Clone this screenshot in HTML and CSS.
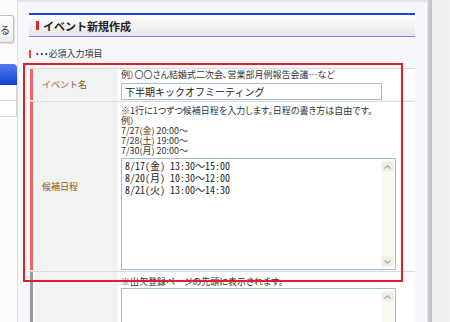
FILE: index.html
```html
<!DOCTYPE html>
<html lang="ja">
<head>
    <meta charset="UTF-8">
    <meta name="viewport" content="width=device-width, initial-scale=1.0">
    <title>イベント新規作成</title>
    <link rel="stylesheet" href="styles.css">
</head>
<body>
    <div class="page">
        <aside class="side">
            <div class="back-btn"><span>戻る</span></div>
            <ul class="side-nav">
                <li class="active"></li>
                <li></li>
                <li></li>
            </ul>
        </aside>

        <main class="main">
            <h2 class="page-title">イベント新規作成</h2>
            <p class="req-note">・・・必須入力項目</p>

            <div class="form">
                <div class="form-row required">
                    <div class="form-label">イベント名</div>
                    <div class="form-value">
                        <p class="hint">例）〇〇さん結婚式二次会、営業部月例報告会議…など</p>
                        <input class="text-input" type="text" value="下半期キックオフミーティング">
                    </div>
                </div>

                <div class="form-row required">
                    <div class="form-label">候補日程</div>
                    <div class="form-value schedule">
                        <p class="hint">※1行に1つずつ候補日程を入力します。日程の書き方は自由です。<br>例）<br>7/27(金) 20:00～<br>7/28(土) 19:00～<br>7/30(月) 20:00～</p>
                        <div class="textarea tall">
                            <div class="textarea-body">8/17(金) 13:30～15:00
8/20(月) 10:30～12:00
8/21(火) 13:00～14:30</div>
                            <div class="scrollbar">
                                <span class="scroll-btn"><svg width="7" height="4" viewBox="0 0 7 4"><path d="M0.5 3.5 L3.5 0.8 L6.5 3.5" fill="none" stroke="#a9a9a0" stroke-width="1.2"/></svg></span>
                                <span class="scroll-btn"><svg width="7" height="4" viewBox="0 0 7 4"><path d="M0.5 0.5 L3.5 3.2 L6.5 0.5" fill="none" stroke="#a9a9a0" stroke-width="1.2"/></svg></span>
                            </div>
                        </div>
                    </div>
                </div>

                <div class="form-row">
                    <div class="form-label"></div>
                    <div class="form-value memo">
                        <p class="hint">※出欠登録ページの先頭に表示されます。</p>
                        <div class="textarea">
                            <div class="textarea-body"></div>
                            <div class="scrollbar">
                                <span class="scroll-btn"><svg width="7" height="4" viewBox="0 0 7 4"><path d="M0.5 3.5 L3.5 0.8 L6.5 3.5" fill="none" stroke="#a9a9a0" stroke-width="1.2"/></svg></span>
                            </div>
                        </div>
                    </div>
                </div>
            </div>

            <div class="highlight"></div>
        </main>

        <div class="rail"></div>
    </div>
</body>
</html>
```

FILE: styles.css
```css
* {
    margin: 0;
    padding: 0;
    box-sizing: border-box;
}

body {
    font-family: "Noto Sans CJK JP", "Liberation Sans", sans-serif;
    font-size: 9px;
    color: #333;
    background: #f0f0f0;
}

.page {
    display: flex;
    height: 322px;
    overflow: hidden;
}

/* left column */
.side {
    width: 18px;
    flex-shrink: 0;
    background: #fbfbfb;
    border-right: 1px solid #e2e2e2;
    padding-top: 15px;
}

.back-btn {
    width: 14px;
    height: 28px;
    display: flex;
    align-items: center;
    justify-content: flex-end;
    overflow: hidden;
    white-space: nowrap;
    padding-right: 3px;
    font-size: 10px;
    color: #333;
    background: linear-gradient(#ffffff, #ececec);
    border: 1px solid #c2c2c2;
    border-left: none;
    border-radius: 0 3px 3px 0;
    box-shadow: 1px 1px 0 #e0e0e0;
}

.side-nav {
    list-style: none;
    margin-top: 21px;
    width: 17px;
}

.side-nav li {
    height: 16px;
    background: #fff;
    border-right: 1px solid #cfcfcf;
    border-bottom: 1px solid #dedede;
}

.side-nav li.active {
    height: 21px;
    background: linear-gradient(#4f7cf0, #1240cc);
    border-right: none;
    border-bottom: none;
    border-radius: 0 4px 0 0;
}

/* main panel */
.main {
    position: relative;
    flex: 1;
    padding: 13px 12px 0 11px;
    background: linear-gradient(#dedede, #f6f8fc 3px);
}

.page-title {
    height: 24px;
    display: flex;
    align-items: center;
    padding-left: 7px;
    font-size: 11px;
    font-weight: bold;
    color: #222;
    background: linear-gradient(#ffffff, #e6e6e6);
    border-top: 2px solid #2042e0;
    border-bottom: 1px solid #6c8af2;
}

.page-title::before {
    content: "";
    width: 3px;
    height: 9px;
    margin-right: 4px;
    background: #e02424;
}

.req-note {
    display: flex;
    align-items: center;
    height: 10px;
    margin-top: 12px;
    line-height: 10px;
    font-feature-settings: "palt";
}

.req-note::before {
    content: "";
    width: 2px;
    height: 8px;
    margin-right: 4px;
    background: #ee4444;
}

.form {
    margin-top: 9px;
}

.form-row {
    display: flex;
    gap: 2px;
    padding: 0 0 1px 1px;
    border-top: 1px solid #dcdcdc;
}

.form-row::before {
    content: "";
    width: 3px;
    background: #9a9a9a;
}

.form-row.required::before {
    background: #f26464;
}

.form-label {
    width: 82px;
    display: flex;
    align-items: center;
    padding-left: 7px;
    background: #f2f2f2;
    color: #8a5a20;
}

.form-value {
    flex: 1;
    background: #fff;
    padding-left: 2px;
}

.hint {
    line-height: 11px;
    font-feature-settings: "palt";
}

.text-input {
    display: block;
    width: 261px;
    height: 17px;
    margin-top: 3px;
    padding: 0 3px;
    font-family: "Noto Sans CJK JP", sans-serif;
    font-size: 10px;
    color: #222;
    border: 1px solid #a7bdd2;
    background: #fff;
}

.schedule {
    padding-top: 4px;
}

.schedule .hint,
.memo .hint {
    line-height: 10px;
}

.memo {
    padding-top: 5px;
}

.textarea {
    display: flex;
    width: 275px;
    height: 60px;
    margin-top: 2px;
    padding: 1px;
    border: 1px solid #a7bdd2;
    background: #fff;
}

.textarea.tall {
    height: 112px;
}

.memo .textarea {
    margin-top: 1px;
}

.textarea-body {
    flex: 1;
    padding: 0 2px;
    white-space: pre;
    font-family: "Noto Sans Mono CJK JP", "Noto Sans CJK JP", monospace;
    font-size: 10px;
    line-height: 12px;
    color: #222;
}

.scrollbar {
    width: 13px;
    display: flex;
    flex-direction: column;
    justify-content: space-between;
    padding: 1px 0;
    background: #fbfbf5;
}

.scroll-btn {
    height: 11px;
    display: flex;
    align-items: center;
    justify-content: center;
    background: #efeee6;
    border: 1px solid #f6f5ef;
    border-radius: 2px;
}

/* red annotation frame */
.highlight {
    position: absolute;
    left: 5px;
    top: 63px;
    width: 380px;
    height: 219px;
    border: 2px solid #e61c24;
    pointer-events: none;
}

.rail {
    width: 23px;
    flex-shrink: 0;
    background: linear-gradient(to right, #e4e4e4 0, #e4e4e4 1px, #d2d2d2 1px, #bfbfbf 5px, #ededed 5px, #f0f0f0);
}
```
